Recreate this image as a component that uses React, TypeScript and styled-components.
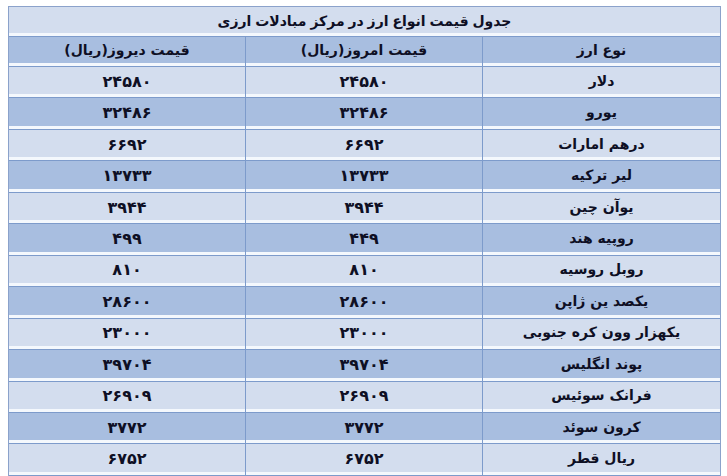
import React from 'react'
import styled, { createGlobalStyle, css } from 'styled-components'

const GlobalStyle = createGlobalStyle`
  html, body {
    margin: 0;
    padding: 0;
    background: #ffffff;
  }
  body {
    padding: 6px 0 0 8px;
    font-family: 'DejaVu Sans', 'Noto Sans', sans-serif;
  }
`

const LIGHT = '#d3ddee'
const DARK = '#a8bee0'
const LINE = '#7d9bcb'

const Table = styled.div`
  direction: rtl;
  width: 713px;
  border: 1px solid #8ba2cb;
  border-bottom: none;
  box-sizing: border-box;
  display: flex;
  flex-direction: column;
`

const TitleRow = styled.div`
  height: 30px;
  display: flex;
  align-items: center;
  justify-content: center;
  background: ${LIGHT};
  border-bottom: 1px solid ${LINE};
  box-shadow: inset 0 -3px 0 #f4f8fd;
  font-size: 14px;
  font-weight: 700;
  word-spacing: -1px;
  color: #0e0f24;
  padding-bottom: 2px;
  box-sizing: border-box;
`

const Row = styled.div<{ $shade: 'light' | 'dark'; $height: number }>(
  ({ $shade, $height }) => css`
    display: grid;
    grid-template-columns: 1fr 1fr 1fr;
    height: ${$height}px;
    background: ${$shade === 'dark' ? DARK : LIGHT};
    border-bottom: 1px solid ${LINE};
    box-shadow: inset 0 -3px 0 #f4f8fd;
    box-sizing: border-box;
  `
)

const Cell = styled.div`
  display: flex;
  align-items: center;
  justify-content: center;
  padding-bottom: 3px;
  font-size: 14px;
  font-weight: 700;
  color: #0e0f24;
  white-space: nowrap;

  & + & {
    border-right: 1px solid ${LINE};
  }
`

const Num = styled.span`
  font-size: 16px;
  padding-top: 1px;
`

const rates: [string, string, string][] = [
  ['دلار', '۲۴۵۸۰', '۲۴۵۸۰'],
  ['یورو', '۳۲۴۸۶', '۳۲۴۸۶'],
  ['درهم امارات', '۶۶۹۲', '۶۶۹۲'],
  ['لیر ترکیه', '۱۳۷۳۳', '۱۳۷۳۳'],
  ['یوآن چین', '۳۹۴۴', '۳۹۴۴'],
  ['روپیه هند', '۴۴۹', '۴۹۹'],
  ['روبل روسیه', '۸۱۰', '۸۱۰'],
  ['یکصد ین ژاپن', '۲۸۶۰۰', '۲۸۶۰۰'],
  ['یکهزار وون کره جنوبی', '۲۳۰۰۰', '۲۳۰۰۰'],
  ['پوند انگلیس', '۳۹۷۰۴', '۳۹۷۰۴'],
  ['فرانک سوئیس', '۲۶۹۰۹', '۲۶۹۰۹'],
  ['کرون سوئد', '۳۷۷۲', '۳۷۷۲'],
  ['ریال قطر', '۶۷۵۲', '۶۷۵۲'],
]

export default function App() {
  return (
    <>
      <GlobalStyle />
      <Table>
        <TitleRow>جدول قیمت انواع ارز در مرکز مبادلات ارزی</TitleRow>
        <Row $shade="dark" $height={30}>
          <Cell>نوع ارز</Cell>
          <Cell>قیمت امروز(ریال)</Cell>
          <Cell>قیمت دیروز(ریال)</Cell>
        </Row>
        {rates.map(([name, today, yesterday], i) => (
          <Row key={name} $shade={i % 2 === 1 ? 'dark' : 'light'} $height={31.46}>
            <Cell>{name}</Cell>
            <Cell>
              <Num>{today}</Num>
            </Cell>
            <Cell>
              <Num>{yesterday}</Num>
            </Cell>
          </Row>
        ))}
      </Table>
    </>
  )
}
